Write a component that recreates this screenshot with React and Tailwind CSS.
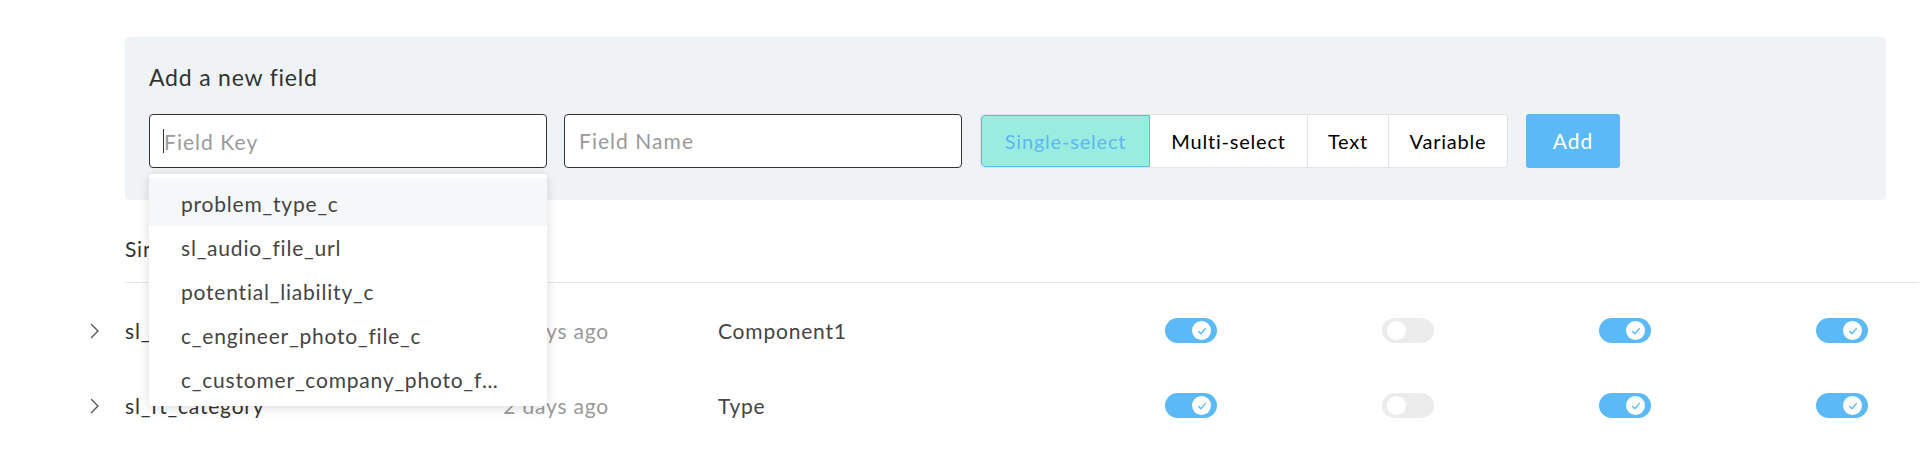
import React from 'react'

const suggestions = [
  'problem_type_c',
  'sl_audio_file_url',
  'potential_liability_c',
  'c_engineer_photo_file_c',
  'c_customer_company_photo_file_c',
]

const rows = [
  { name: 'sl_component', date: '2 days ago', label: 'Component1', toggles: [true, false, true, true] },
  { name: 'sl_ft_category', date: '2 days ago', label: 'Type', toggles: [true, false, true, true] },
]

const Toggle = ({ on }) => (
  <div className={`relative h-[25px] w-[52px] rounded-full ${on ? 'bg-[#5bbaf5]' : 'bg-[#ececec]'}`}>
    <div
      className={`absolute top-[3px] flex h-[19px] w-[19px] items-center justify-center rounded-full bg-white ${
        on ? 'left-[27px]' : 'left-[5px]'
      }`}
    >
      {on && (
        <svg width="12" height="12" viewBox="0 0 14 14" fill="none">
          <path d="M3 7.5 L5.8 10.2 L11 4" stroke="#5bbaf5" strokeWidth="1.6" strokeLinecap="round" strokeLinejoin="round" />
        </svg>
      )}
    </div>
  </div>
)

const App = () => {
  return (
    <div className="min-h-[456px] bg-white pt-[37px] font-['Lato',sans-serif] tracking-[0.05em] text-[#333]">

      {/* Add field panel */}
      <div className="ml-[125px] mr-[36px] rounded-[4px] bg-[#f0f3f6] px-6 pb-[32px] pt-[28px]">
        <h2 className="text-[23px] leading-[24px] text-[#333]">Add a new field</h2>

        <div className="mt-[25px] flex h-[54px]">
          <div className="relative w-[398px]">
            <input
              className="h-full w-full rounded-[4px] border border-[#333] bg-white px-[14px] text-[21px] tracking-[0.05em] outline-none placeholder:text-[#9a9a9a]"
              placeholder="Field Key"
            />
            <span className="absolute left-[14px] top-[15px] h-[24px] w-px bg-[#333]" />

            {/* Suggestions */}
            <div className="absolute left-0 top-[60px] z-10 w-full rounded-[4px] bg-white pb-[4px] pt-[4px] shadow-[0_2px_12px_rgba(0,0,0,0.14)]">
              {suggestions.map((s, i) => (
                <div
                  key={s}
                  className={`flex items-center pl-8 pr-[46px] text-[21px] text-[#444] ${
                    i === 0 ? 'h-[48px] bg-[#f6f7f9] pt-[4px]' : 'h-[44px]'
                  }`}
                >
                  <span className="min-w-0 truncate">{s}</span>
                </div>
              ))}
            </div>
          </div>

          <input
            className="ml-[17px] w-[398px] rounded-[4px] border border-[#333] bg-white px-[14px] text-[21px] tracking-[0.05em] outline-none placeholder:text-[#9a9a9a]"
            placeholder="Field Name"
          />

          <div className="ml-[18px] flex overflow-hidden rounded-[4px] border border-[#e2e2e2] bg-white text-[20px]">
            <div className="flex w-[169px] items-center justify-center rounded-l-[4px] border border-[#5bbaf5] bg-[#98ede0] text-[#62b6f2]">
              Single-select
            </div>
            <div className="flex w-[158px] items-center justify-center border-r border-[#e2e2e2] text-black">Multi-select</div>
            <div className="flex w-[81px] items-center justify-center border-r border-[#e2e2e2] text-black">Text</div>
            <div className="flex w-[118px] items-center justify-center text-black">Variable</div>
          </div>

          <button className="ml-[18px] w-[94px] rounded-[3px] bg-[#5bbaf5] text-[21px] tracking-[0.05em] text-white">Add</button>
        </div>
      </div>

      {/* Field list */}
      <div className="ml-[125px] mr-[3px] mt-[24px] flex h-[59px] items-center border-b border-[#e4e4e4] pb-[9px]">
        <span className="text-[21px] text-[#333]">Single-select fields</span>
      </div>

      <div className="ml-[60px] pt-[10px]">
        {rows.map((r) => (
          <div
            key={r.name}
            className="grid h-[75px] grid-cols-[65px_295px_189px_556px_217px_217px_217px_1fr] items-center text-[21px]"
          >
            <div className="pl-[30px]">
              <svg width="10" height="16" viewBox="0 0 10 16" fill="none">
                <path d="M1.5 1.5 L8 8 L1.5 14.5" stroke="#555" strokeWidth="1.4" strokeLinecap="round" strokeLinejoin="round" />
              </svg>
            </div>
            <div className="text-[#333]">{r.name}</div>
            <div className="text-right text-[#999]">{r.date}</div>
            <div className="pl-[109px] text-[#444]">{r.label}</div>
            {r.toggles.map((t, i) => (
              <div key={i}>
                <Toggle on={t} />
              </div>
            ))}
          </div>
        ))}
      </div>

    </div>
  )
}

export default App
